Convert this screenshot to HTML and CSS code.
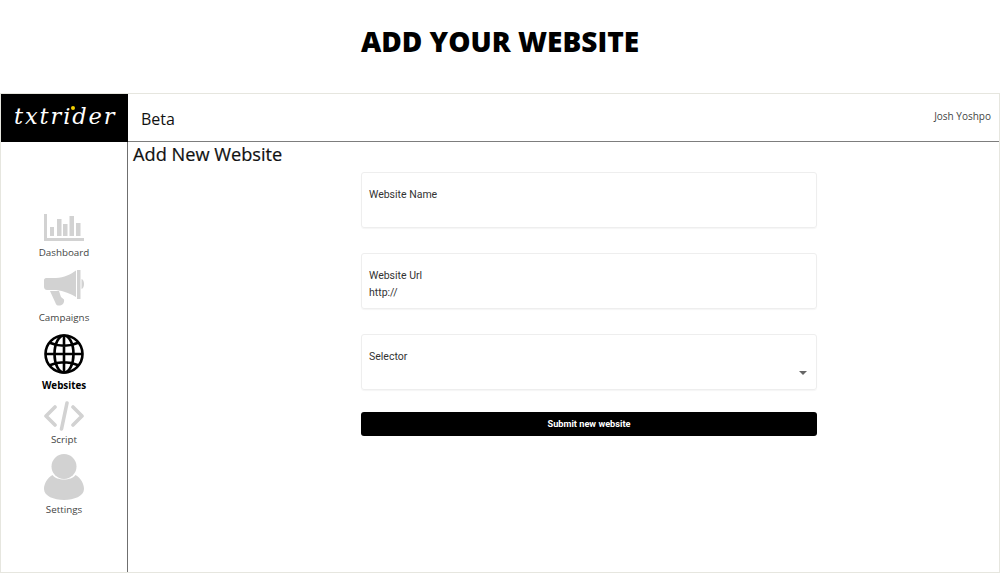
FILE: index.html
```html
<!DOCTYPE html>
<html lang="en">
<head>
<meta charset="utf-8">
<title>Add your website</title>
<link rel="stylesheet" href="styles.css">
</head>
<body>
<h1 class="page-title">ADD YOUR WEBSITE</h1>
<div class="app">
  <header class="topbar">
    <div class="logo"><span class="logo-text">txtrider</span><span class="logo-dot"></span></div>
    <div class="beta">Beta</div>
    <div class="user">Josh Yoshpo</div>
  </header>
  <div class="body">
    <nav class="sidebar">
      <a class="nav-item nav-dashboard">
        <svg class="icon" width="40" height="27" viewBox="0 0 40 27"><g fill="#d2d2d2"><path d="M0 0h3v24h37v3H0z"/><rect x="6" y="13" width="4" height="9"/><rect x="13" y="5" width="4.500" height="17"/><rect x="19" y="10" width="4.500" height="12"/><rect x="25.500" y="2" width="4.500" height="20"/><rect x="32" y="9" width="4.500" height="13"/></g></svg>
        <span>Dashboard</span>
      </a>
      <a class="nav-item nav-campaigns">
        <svg class="icon" width="40" height="36" viewBox="0 0 40 36"><g fill="#d2d2d2"><path d="M2 8h10C20 8 27 4 32 0.500L32 27C27 24 20 21 12 20H3C1 20 0 18.500 0 17V10C0 9 1 8 2 8z"/><path d="M33 0h3.500v29H33z"/><path d="M37.500 9c2 .500 2.500 3 2.500 5s-.5 4.500-2.500 5z"/><path d="M6 21h9l2 6 3 2.500c.5 3-1 5.500-4 6-2.500 .400-4-.5-4.500-2.500z"/></g></svg>
        <span>Campaigns</span>
      </a>
      <a class="nav-item nav-websites active">
        <svg class="icon" width="40" height="40" viewBox="0 0 40 40"><g fill="none" stroke="#000" stroke-width="2.600"><circle cx="20" cy="20" r="18.500"/><ellipse cx="20" cy="20" rx="9.500" ry="18.500"/><path d="M20 1.500v37M1.500 20h37M5 8.500Q20 15 35 8.500M5 31.500Q20 25 35 31.500"/></g></svg>
        <span>Websites</span>
      </a>
      <a class="nav-item nav-script">
        <svg class="icon" width="40" height="30" viewBox="0 0 40 30"><g fill="none" stroke="#d2d2d2" stroke-width="3.600" stroke-linecap="round" stroke-linejoin="round"><path d="M11 6L2 15l9 9M29 6l9 9-9 9M23 2l-5.500 26"/></g></svg>
        <span>Script</span>
      </a>
      <a class="nav-item nav-settings">
        <svg class="icon" width="40" height="46" viewBox="0 0 40 46"><g fill="#d2d2d2"><circle cx="20" cy="12.500" r="12.500"/><path d="M8.500 21c4 6 19 6 23 0C37 24 40 30 40 35c0 7-10 11-20 11S0 42 0 35c0-5 3-11 8.500-14z"/></g></svg>
        <span>Settings</span>
      </a>
    </nav>
    <main class="main">
      <h2 class="heading">Add New Website</h2>
      <form class="form">
        <div class="field">
          <label class="field-label">Website Name</label>
        </div>
        <div class="field">
          <label class="field-label">Website Url</label>
          <div class="field-value">http://</div>
        </div>
        <div class="field field-select">
          <label class="field-label">Selector</label>
          <span class="caret"></span>
        </div>
        <button class="submit" type="button">Submit new website</button>
      </form>
    </main>
  </div>
</div>
</body>
</html>
```
FILE: styles.css
```css
* { box-sizing: border-box; }
html, body { margin: 0; height: 100%; }
body {
  background: #fff;
  font-family: "Open Sans", sans-serif;
  color: #111;
  overflow: hidden;
}
.page-title {
  margin: 0;
  height: 93px;
  padding-top: 22px;
  text-align: center;
  font-size: 28px;
  line-height: 38px;
  font-weight: 800;
  color: #000;
}
.app {
  height: 480px;
  border: 1px solid #e6e6df;
  display: flex;
  flex-direction: column;
}
.topbar {
  height: 48px;
  flex: none;
  display: flex;
  border-bottom: 1px solid #7d7d7d;
}
.logo {
  width: 127px;
  margin-bottom: -1px;
  background: #000;
  position: relative;
  padding: 7px 0 0 13px;
  white-space: nowrap;
}
.logo-text {
  font-family: "DejaVu Serif", serif;
  font-style: italic;
  font-size: 22.500px;
  line-height: 30px;
  color: #fff;
  letter-spacing: 1.900px;
}
.logo-dot {
  position: absolute;
  left: 70px;
  top: 12px;
  width: 4px;
  height: 4px;
  border-radius: 50%;
  background: #f4d000;
}
.beta {
  margin-left: 13px;
  padding-top: 12px;
  font-size: 16px;
  line-height: 26px;
  color: #111;
}
.user {
  margin-left: auto;
  padding: 14px 8px 0 0;
  font-size: 10px;
  line-height: 16px;
  color: #444;
}
.body {
  flex: 1;
  display: flex;
  min-height: 0;
}
.sidebar {
  width: 127px;
  flex: none;
  border-right: 1px solid #6f6f6f;
  padding-top: 72px;
  display: flex;
  flex-direction: column;
  align-items: center;
}
.nav-item {
  display: flex;
  flex-direction: column;
  align-items: center;
  font-size: 9.800px;
  line-height: 14px;
  color: #444;
}
.icon { display: block; flex: none; }
.nav-dashboard span { margin-top: 5px; }
.nav-campaigns { margin-top: 10px; }
.nav-campaigns span { margin-top: 5px; }
.nav-websites { margin-top: 9px; }
.nav-websites span { margin-top: 5px; }
.nav-script { margin-top: 8px; }
.nav-script span { margin-top: 2px; }
.nav-settings { margin-top: 7px; }
.nav-settings span { margin-top: 3px; }
.active { color: #000; font-weight: 700; }
.main {
  flex: 1;
  padding: 0 0 0 5px;
}
.heading {
  margin: 0;
  font-size: 18.200px;
  line-height: 24px;
  font-weight: 400;
  color: #111;
  -webkit-text-stroke: 0.2px #111;
}
.form {
  width: 456px;
  margin: 6px 0 0 228px;
  display: flex;
  flex-direction: column;
  gap: 25px;
}
.field {
  height: 56px;
  border: 1px solid #eeeeee;
  border-radius: 3px;
  box-shadow: 0 1px 1px rgba(0,0,0,.04);
  padding: 14px 7px 0;
  position: relative;
  font-family: Roboto, sans-serif;
  font-size: 10.500px;
  line-height: 16px;
  color: #333;
}
.field-label { display: block; }
.field-value { margin-top: 1px; }
.caret {
  position: absolute;
  right: 9px;
  top: 36px;
  width: 0;
  height: 0;
  border-left: 4px solid transparent;
  border-right: 4px solid transparent;
  border-top: 4px solid #666;
}
.submit {
  height: 24px;
  margin-top: -3px;
  border: 0;
  border-radius: 3px;
  background: #000;
  color: #fff;
  font-family: Roboto, sans-serif;
  font-size: 9.200px;
  font-weight: 700;
  line-height: 24px;
  padding: 0;
  text-align: center;
}
```
